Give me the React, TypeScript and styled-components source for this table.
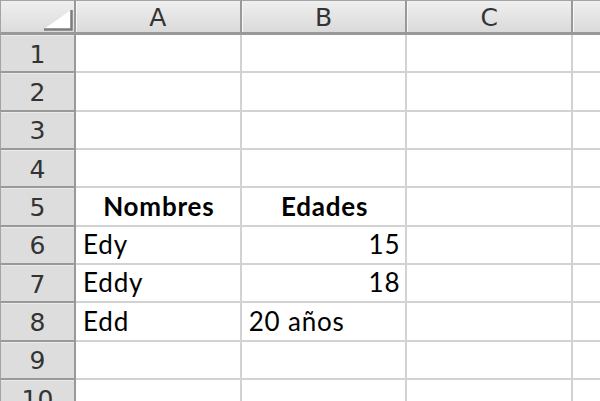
import React from "react";
import styled, { createGlobalStyle } from "styled-components";

const Global = createGlobalStyle`
  html, body { margin: 0; padding: 0; background: #ffffff; }
  body { width: 600px; height: 401px; overflow: hidden; }
`;

const Sheet = styled.div`
  width: 600px;
  height: 401px;
  overflow: hidden;
  background: #ffffff;
`;

const Grid = styled.div`
  display: grid;
  grid-template-columns: 76px repeat(4, 165.7px);
  grid-template-rows: 35px repeat(10, 38.35px);
`;

const Corner = styled.div`
  box-sizing: border-box;
  background: linear-gradient(#efefef, #dcdcdc);
  border-right: 2px solid #999999;
  border-bottom: 3px solid #999999;
  border-top: 1px solid #a4a4a4;
  border-left: 1px solid #a4a4a4;
  display: flex;
  justify-content: flex-end;
  align-items: flex-end;
  padding: 0 1px 1px 0;
`;

const ColHead = styled.div`
  box-sizing: border-box;
  background: linear-gradient(#efefef, #dadada);
  border-right: 2px solid #999999;
  border-bottom: 3px solid #999999;
  border-top: 1px solid #a4a4a4;
  box-shadow: inset 1px 0 0 #f6f6f6;
  display: flex;
  align-items: center;
  justify-content: center;
  font-family: "DejaVu Sans", sans-serif;
  font-size: 25px;
  color: #333333;
  padding-top: 1px;
`;

const RowHead = styled.div`
  box-sizing: border-box;
  background: #dddddd;
  border-right: 2px solid #999999;
  border-bottom: 2px solid #999999;
  border-left: 1px solid #a4a4a4;
  box-shadow: inset 0 1px 0 #ebebeb;
  display: flex;
  align-items: center;
  justify-content: center;
  font-family: "DejaVu Sans", sans-serif;
  font-size: 25px;
  color: #333333;
  padding-top: 2px;
`;

const Cell = styled.div<{ $align?: "left" | "center" | "right"; $bold?: boolean }>`
  box-sizing: border-box;
  background: #ffffff;
  border-right: 2px solid #d2d2d2;
  border-bottom: 2px solid #d2d2d2;
  display: flex;
  align-items: flex-end;
  justify-content: ${(p) =>
    p.$align === "right" ? "flex-end" : p.$align === "center" ? "center" : "flex-start"};
  padding: 0 5px 4px 7px;
  font-family: Lato, "Liberation Sans", sans-serif;
  font-size: 26px;
  letter-spacing: 0.8px;
  line-height: 30px;
  font-weight: ${(p) => (p.$bold ? 700 : 400)};
  color: #000000;
  white-space: nowrap;
`;

const CornerMark = () => (
  <svg width="30" height="22" viewBox="0 0 30 22">
    <polygon points="1,20 28,1 28,20" fill="#ffffff" />
    <polyline points="1,20.5 28.5,20.5 28.5,1" fill="none" stroke="#7c7c7c" strokeWidth="2.5" />
  </svg>
);

type CellData = { text: string; align?: "left" | "center" | "right"; bold?: boolean };

const columns = ["A", "B", "C", ""];

const data: Record<number, CellData[]> = {
  5: [
    { text: "Nombres", align: "center", bold: true },
    { text: "Edades", align: "center", bold: true },
  ],
  6: [{ text: "Edy" }, { text: "15", align: "right" }],
  7: [{ text: "Eddy" }, { text: "18", align: "right" }],
  8: [{ text: "Edd" }, { text: "20 años" }],
};

export default function App() {
  const rows = Array.from({ length: 10 }, (_, i) => i + 1);
  return (
    <>
      <Global />
      <Sheet>
        <Grid>
          <Corner>
            <CornerMark />
          </Corner>
          {columns.map((c, ci) => (
            <ColHead key={ci}>{c}</ColHead>
          ))}
          {rows.map((r) => (
            <React.Fragment key={r}>
              <RowHead>{r}</RowHead>
              {columns.map((_, ci) => {
                const d = data[r]?.[ci];
                return (
                  <Cell key={ci} $align={d?.align} $bold={d?.bold}>
                    {d?.text ?? ""}
                  </Cell>
                );
              })}
            </React.Fragment>
          ))}
        </Grid>
      </Sheet>
    </>
  );
}
